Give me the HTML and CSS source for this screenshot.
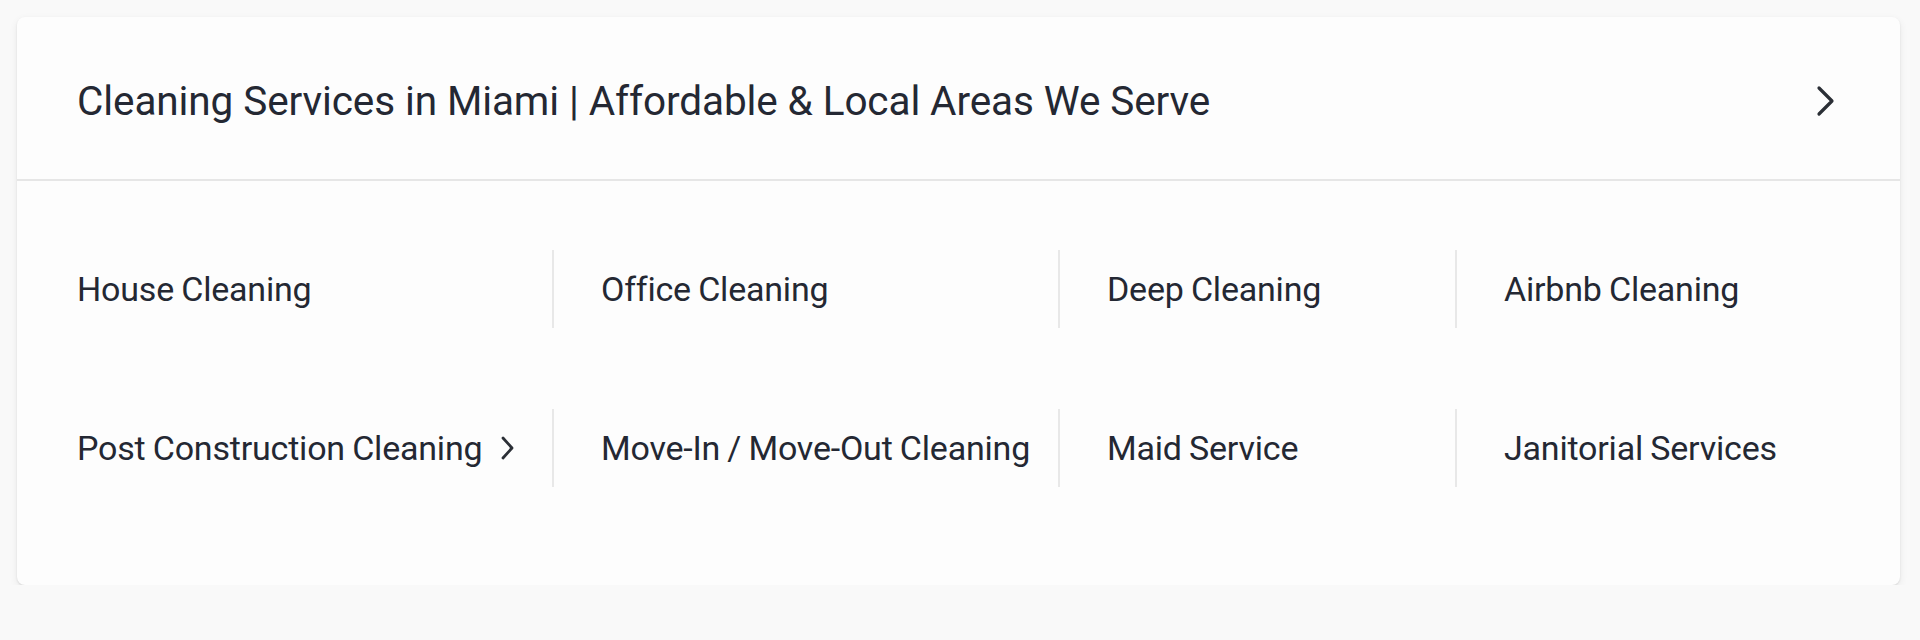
FILE: index.html
```html
<!DOCTYPE html>
<html lang="en">
<head>
<meta charset="utf-8">
<title>Cleaning Services in Miami</title>
<link rel="stylesheet" href="styles.css">
</head>
<body>
<div class="card">
	<a class="card-head" href="#">
		<h2 class="card-title">Cleaning Services in Miami | Affordable &amp; Local Areas We Serve</h2>
		<svg class="chev" width="22" height="34" viewBox="0 0 22 34"><path d="M4 4 L17 17 L4 30" fill="none" stroke="#2b2f36" stroke-width="3.2" stroke-linecap="round" stroke-linejoin="round"/></svg>
	</a>
	<div class="services">
		<a class="svc" href="#">House Cleaning</a>
		<a class="svc" href="#">Office Cleaning</a>
		<a class="svc" href="#">Deep Cleaning</a>
		<a class="svc" href="#">Airbnb Cleaning</a>
		<a class="svc" href="#">Post Construction Cleaning
			<svg class="chev-sm" width="16" height="26" viewBox="0 0 16 26"><path d="M3 3 L12 13 L3 23" fill="none" stroke="#2b2f36" stroke-width="2.8" stroke-linecap="round" stroke-linejoin="round"/></svg>
		</a>
		<a class="svc" href="#">Move-In / Move-Out Cleaning</a>
		<a class="svc" href="#">Maid Service</a>
		<a class="svc" href="#">Janitorial Services</a>
	</div>
</div>
</body>
</html>
```
FILE: styles.css
```css
body {
	margin:0;
	padding:17px 20px 0 17px;
	background:#f9f9f9;
	font-family:Roboto, "Liberation Sans", sans-serif;
	color:#242833;}
.card {
	background:#fdfdfd;
	border-radius:8px;
	box-shadow:0 1px 2px rgba(0,0,0,.10), 0 3px 8px rgba(0,0,0,.07);
	height:568px;}
.card-head {
	display:flex;
	align-items:center;
	justify-content:space-between;
	height:156px;
	padding:6px 63px 0 60px;
	border-bottom:2px solid #e6e6e6;
	color:inherit;
	text-decoration:none;}
.card-title {
	margin:0;
	font-size:40.5px;
	font-weight:400;
	letter-spacing:-0.1px;}
.services {
	display:grid;
	grid-template-columns:535px 506px 397px 1fr;
	grid-auto-rows:78px;
	row-gap:81px;
	padding-top:69px;}
.svc {
	display:flex;
	align-items:center;
	gap:18px;
	padding-left:47px;
	border-left:2px solid #e8e8e8;
	font-size:34px;
	word-spacing:-1px;
	letter-spacing:-0.2px;
	color:inherit;
	text-decoration:none;}
.svc:nth-child(4n+1) {
	padding-left:60px;
	border-left:0;}
```
